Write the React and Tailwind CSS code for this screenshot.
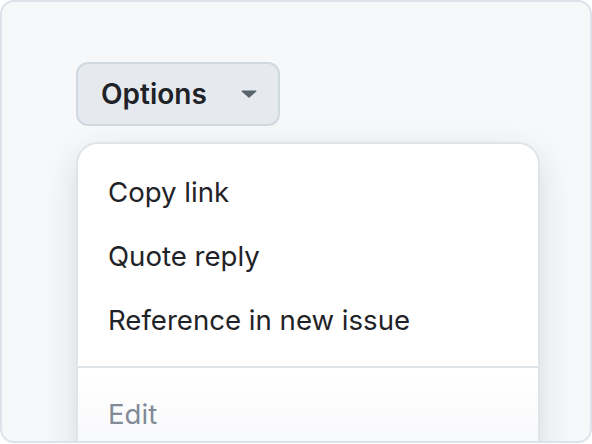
const font = { fontFamily: 'Inter, "Noto Sans", sans-serif' };

const items = ['Copy link', 'Quote reply', 'Reference in new issue'];

export default function App() {
  return (
    <div className="w-[592px] h-[444px] bg-white" style={font}>
      <div className="h-[443px] rounded-[14px] border-2 border-[#dde3e9] bg-[#f6f8fa] overflow-hidden pl-[74px] pt-[60px]">
        {/* trigger */}
        <button className="flex items-center h-[64px] w-[204px] rounded-[12px] border-2 border-[#d1d9e0] bg-[#e6eaef] pl-[23px] text-[28px] font-semibold text-[#1f2328] leading-[40px]">
          <span>Options</span>
          <svg className="ml-auto mr-[21px]" width="16" height="8" viewBox="0 0 16 8">
            <path d="M1 0.5h14a.6.6 0 0 1 .4 1L8.5 7.6a.7.7 0 0 1-1 0L.6 1.5A.6.6 0 0 1 1 .5Z" fill="#59636e" />
          </svg>
        </button>

        {/* menu */}
        <div className="mt-[16px] w-[464px] h-[400px] rounded-t-[22px] border-2 border-[#dfe4e9] bg-[linear-gradient(to_bottom,#ffffff_0px,#ffffff_235px,#f7f8fa_300px)] shadow-[0_12px_24px_-6px_rgba(37,41,46,0.04),0_12px_36px_0_rgba(37,41,46,0.12)]">
          <ul className="pt-[16px]">
            {items.map((label) => (
              <li key={label} className="h-[64px] px-[30px] flex items-center text-[27.6px] leading-[40px] text-[#1f2328]">
                {label}
              </li>
            ))}
          </ul>
          <div className="mt-[14px] h-[2px] bg-[#dfe4e9]" />
          <div className="mt-[14px] h-[64px] px-[30px] flex items-center text-[27.6px] leading-[40px] text-[#818b98]">
            Edit
          </div>
        </div>
      </div>
    </div>
  );
}
